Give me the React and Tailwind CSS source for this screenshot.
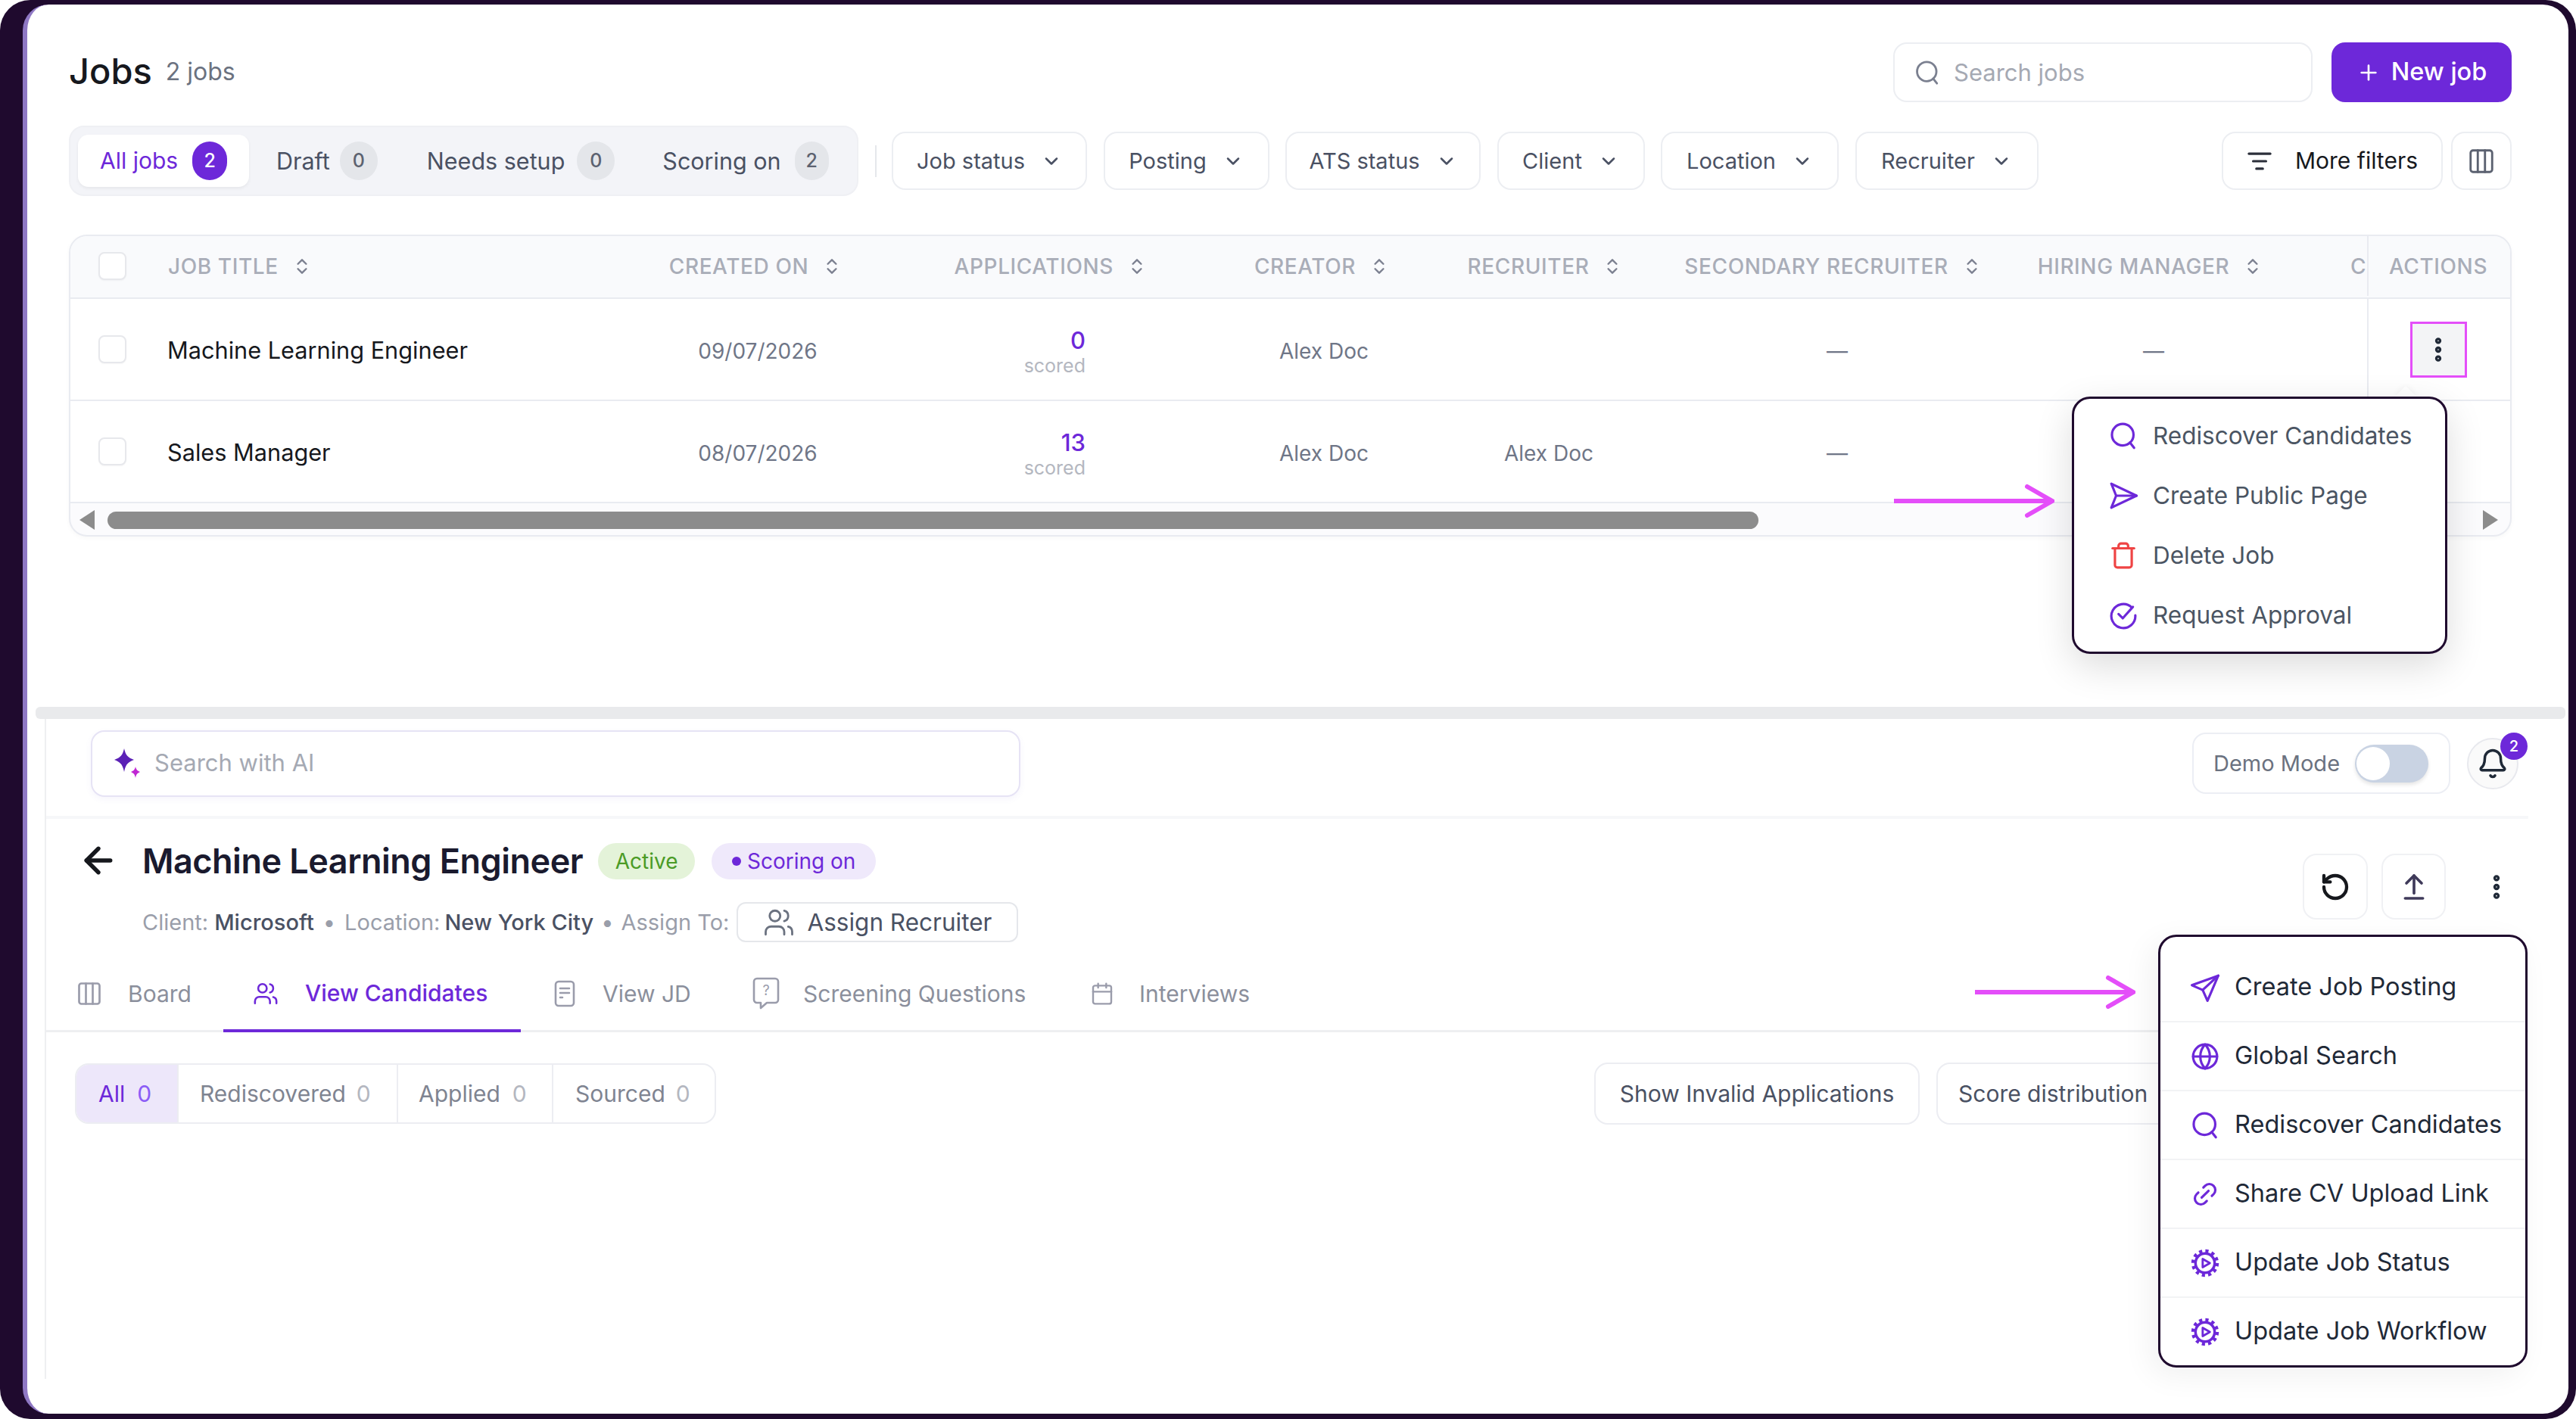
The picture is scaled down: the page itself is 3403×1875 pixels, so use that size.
import { Plus, ChevronDown, ChevronsUpDown, Columns3, ListFilter, EllipsisVertical, Trash, Globe, Link2, RotateCcw, ArrowUpFromLine, Bell, Users, Calendar, ArrowLeft } from 'lucide-react'

const FONT = "font-['Inter','Noto_Sans',sans-serif]"

function Q({ size = 36, className = '' }) {
  return (
    <svg width={size} height={size} viewBox="0 0 24 24" fill="none" stroke="currentColor" strokeWidth="2" strokeLinecap="round" className={className}>
      <circle cx="11.5" cy="11" r="9" />
      <path d="M17.5 17.5 21 22" />
    </svg>
  )
}

function Plane({ size = 38, className = '' }) {
  return (
    <svg width={size} height={size} viewBox="0 0 24 24" fill="none" stroke="currentColor" strokeWidth="2" strokeLinejoin="round" strokeLinecap="round" className={className}>
      <path d="M2 2l21 10-21 10 4-10-4-10z" />
      <path d="M6 12h17" />
    </svg>
  )
}

function Pointer({ size = 38, className = '' }) {
  return (
    <svg width={size} height={size} viewBox="0 0 24 24" fill="none" stroke="currentColor" strokeWidth="2" strokeLinejoin="round" strokeLinecap="round" className={className}>
      <path d="M23 2 1 10l9 4 4 9 9-21z" />
      <path d="M10 14 23 2" />
    </svg>
  )
}

function CheckRing({ size = 38, className = '' }) {
  return (
    <svg width={size} height={size} viewBox="0 0 24 24" fill="none" stroke="currentColor" strokeWidth="2" strokeLinecap="round" strokeLinejoin="round" className={className}>
      <path d="M19 5.5A10 10 0 1 0 22 12" />
      <path d="m8 11 3.5 3.5L20 5" />
    </svg>
  )
}

function GearPlay({ size = 38, className = '' }) {
  return (
    <svg width={size} height={size} viewBox="0 0 24 24" fill="none" stroke="currentColor" strokeLinejoin="round" className={className}>
      <circle cx="12" cy="12" r="8" strokeWidth="2.2" />
      <circle cx="12" cy="12" r="10" strokeWidth="3" strokeDasharray="2.6 2.63" />
      <path d="M10 8.5v7l6-3.5-6-3.5z" strokeWidth="1.8" />
    </svg>
  )
}

function Sparkle() {
  return (
    <svg width="36" height="40" viewBox="0 0 36 40">
      <path d="M14 0c2 9 5 12 13 15-8 3-11 6-13 16-2-10-5-13-13-16 8-3 11-6 13-15z" fill="#5b21b6" />
      <path d="M29 24c1 4 2 5 6 7-4 2-5 3-6 8-1-5-2-6-6-8 4-2 5-3 6-7z" fill="#c026d3" />
    </svg>
  )
}

function DocIcon() {
  return (
    <svg width="30" height="36" viewBox="0 0 30 36" fill="none" stroke="#9a9cab" strokeWidth="2.6" strokeLinecap="round">
      <rect x="3" y="2" width="24" height="32" rx="4" />
      <path d="M9 11h12M9 17h12M9 23h3" />
    </svg>
  )
}

function QuestionBubble() {
  return (
    <svg width="36" height="44" viewBox="0 0 36 44" fill="none" stroke="#9a9cab" strokeWidth="2.6" strokeLinejoin="round">
      <path d="M6 2h24a4 4 0 0 1 4 4v24a4 4 0 0 1-4 4H19l-8 7v-7H6a4 4 0 0 1-4-4V6a4 4 0 0 1 4-4z" />
      <text x="18" y="24" fontSize="18" textAnchor="middle" fill="#9a9cab" stroke="none" fontFamily="Inter">?</text>
    </svg>
  )
}

function Arrow({ className = '', width = 210 }) {
  return (
    <svg width={width} height="44" viewBox={`0 0 ${width} 44`} fill="none" stroke="#e44ef9" strokeLinecap="round" className={`absolute ${className}`}>
      <path d={`M0 22H${width - 4}`} strokeWidth="6" strokeLinecap="butt" />
      <path d={`M${width - 36} 3l33 19-33 19`} strokeWidth="6" />
    </svg>
  )
}

function Checkbox() {
  return <div className="w-[37px] h-[37px] rounded-[8px] border-2 border-[#e7e8ec] bg-white shadow-[0_1px_2px_rgba(0,0,0,0.04)]" />
}

function FilterBtn({ label, w }) {
  return (
    <button className={`${w} h-[77px] shrink-0 rounded-[18px] border-2 border-[#eceef2] bg-white flex items-center justify-center gap-[21px] text-[29px] text-[#4a5163]`}>
      {label}
      <ChevronDown size={28} strokeWidth={2.2} className="text-[#4a5163]" />
    </button>
  )
}

function TabCount({ n, active, w = 'w-[50px]' }) {
  return (
    <span className={`${w} h-[51px] rounded-full flex items-center justify-center text-[25px] font-medium ${active ? 'bg-[#6d28d9] text-white' : 'bg-[#e4e6ea] text-[#5c6270]'}`}>{n}</span>
  )
}

function Head({ label, sort = true }) {
  return (
    <span className="flex items-center gap-[18px] whitespace-nowrap text-[28px] font-medium tracking-[0.6px] text-[#a9adb8]">
      {label}
      {sort && <ChevronsUpDown size={26} strokeWidth={2.2} className="text-[#7c8090]" />}
    </span>
  )
}

const TEAL = 'text-[28px] text-[#6f7687] pt-[4px]'

function JobRow({ title, date, count, recruiter, hiring, kebab }) {
  return (
    <div className="h-[135px] flex items-center border-b-2 border-[#e9ebf1] bg-white">
      <div className="w-[129px] pl-[37px] shrink-0"><Checkbox /></div>
      <div className="w-[649px] shrink-0 text-[30.7px] text-[#16181d] pt-[4px] -ml-[1px] mr-[1px]">{title}</div>
      <div className={`w-[260px] shrink-0 text-center ${TEAL}`}>{date}</div>
      <div className="w-[510px] shrink-0 text-right pr-[207px] leading-none pt-[6px]">
        <div className="text-[31px] text-[#6d28d9] font-medium leading-[36px]">{count}</div>
        <div className="text-[25px] text-[#b4b7c0] leading-[30px]">scored</div>
      </div>
      <div className={`w-[216px] shrink-0 text-center ${TEAL}`}>Alex Doc</div>
      <div className={`w-[368px] shrink-0 text-center ${TEAL} pl-[10px]`}>{recruiter}</div>
      <div className={`w-[396px] shrink-0 text-center ${TEAL} pl-[8px]`}>—</div>
      <div className={`w-[442px] shrink-0 text-center ${TEAL} pl-[6px]`}>{hiring}</div>
      <div className="w-[64px] shrink-0" />
      <div className="flex-1 self-stretch border-l-2 border-[#e9ebf1] flex items-center justify-center">
        {kebab && (
          <div className="w-[75px] h-[74px] border-[3px] border-[#e44ef9] bg-[#f3f4f6] flex items-center justify-center -ml-[3px]">
            <EllipsisVertical size={40} strokeWidth={3} className="text-[#1f2937]" />
          </div>
        )}
      </div>
    </div>
  )
}

function MenuOne() {
  const items = [
    [<Q key="q" size={38} className="text-[#6d28d9]" />, 'Rediscover Candidates'],
    [<Plane key="p" size={38} className="text-[#6d28d9]" />, 'Create Public Page'],
    [<Trash key="t" size={38} strokeWidth={2} className="text-[#ef4444]" />, 'Delete Job'],
    [<CheckRing key="c" size={38} className="text-[#6d28d9]" />, 'Request Approval'],
  ]
  return (
    <>
      <div className="absolute left-[3132px] top-[508px] w-[20px] h-[20px] rotate-45 bg-white shadow-[0_0_8px_rgba(0,0,0,0.06)]" />
      <div className="absolute left-[2701px] top-[518px] w-[496px] h-[340px] rounded-[24px] border-[3px] border-[#1f0a2e] bg-white shadow-[0_16px_50px_rgba(0,0,0,0.14)] pl-[46px] pt-[9px]">
        {items.map(([icon, label]) => (
          <div key={label} className="h-[79px] flex items-center gap-[20px] text-[31.5px] text-[#4b5563] whitespace-nowrap">
            {icon}
            {label}
          </div>
        ))}
      </div>
    </>
  )
}

function MenuTwo() {
  const items = [
    [<Pointer key="a" size={38} className="text-[#6d28d9]" />, 'Create Job Posting'],
    [<Globe key="b" size={38} strokeWidth={2} className="text-[#6d28d9]" />, 'Global Search'],
    [<Q key="c" size={38} className="text-[#6d28d9]" />, 'Rediscover Candidates'],
    [<Link2 key="d" size={38} strokeWidth={2} className="text-[#6d28d9] -rotate-45" />, 'Share CV Upload Link'],
    [<GearPlay key="e" size={38} className="text-[#6d28d9]" />, 'Update Job Status'],
    [<GearPlay key="f" size={38} className="text-[#6d28d9]" />, 'Update Job Workflow'],
  ]
  return (
    <div className="absolute left-[2815px] top-[1229px] w-[488px] h-[572px] rounded-[24px] border-[3px] border-[#1f0a2e] bg-white shadow-[-10px_10px_40px_rgba(0,0,0,0.06)] pt-[22px] overflow-hidden">
      {items.map(([icon, label]) => (
        <div key={label} className="h-[91px] flex items-center gap-[20px] pl-[40px] border-b-2 border-[#f2f3f5] text-[32.5px] text-[#1f2937] whitespace-nowrap">
          {icon}
          {label}
        </div>
      ))}
    </div>
  )
}

function TopSection() {
  return (
    <section className="h-[928px] shrink-0 pl-[55px] pr-[75px] pt-[50px]">
      <div className="flex items-center justify-between h-[79px]">
        <div className="flex items-baseline gap-[18px] pt-[3px]">
          <h1 className="text-[47px] font-medium text-[#16181d] leading-none">Jobs</h1>
          <span className="text-[32px] text-[#6b7280] -translate-y-[5px]">2 jobs</span>
        </div>
        <div className="flex items-center gap-[25px]">
          <div className="w-[554px] h-[79px] rounded-[18px] border-2 border-[#eceef2] flex items-center gap-[18px] pl-[26px] text-[31px] text-[#a5a9b3]">
            <Q size={34} className="text-[#7b8090]" />
            <span className="pt-[2px]">Search jobs</span>
          </div>
          <button className="w-[238px] h-[79px] rounded-[18px] bg-[#6d28d9] text-white flex items-center justify-center gap-[14px] text-[32.5px] font-medium">
            <Plus size={32} strokeWidth={2} />
            New job
          </button>
        </div>
      </div>

      <div className="flex items-center mt-[31px] h-[93px]">
        <div className="w-[1043px] h-[93px] rounded-[20px] bg-[#f3f4f8] border-2 border-[#eff0f4] flex items-center pl-[10px] text-[30.5px] text-[#4a5163] shrink-0">
          <div className="w-[226px] h-[69px] rounded-[14px] bg-white shadow-[0_2px_4px_rgba(0,0,0,0.06)] flex items-center pl-[29px] gap-[19px] text-[#6d28d9] shrink-0">
            <span className="text-[30px]">All jobs</span> <TabCount n="2" active w="w-[46px]" />
          </div>
          <span className="ml-[36px]">Draft</span>
          <span className="ml-[13px]"><TabCount n="0" /></span>
          <span className="ml-[65px]">Needs setup</span>
          <span className="ml-[16px]"><TabCount n="0" /></span>
          <span className="ml-[63px]">Scoring on</span>
          <span className="ml-[18px]"><TabCount n="2" w="w-[45px]" /></span>
        </div>
        <div className="w-[2px] h-[42px] bg-[#e5e7eb] ml-[22px] mr-[20px] shrink-0" />
        <div className="flex gap-[21.5px]">
          <FilterBtn label="Job status" w="w-[258px]" />
          <FilterBtn label="Posting" w="w-[219px]" />
          <FilterBtn label="ATS status" w="w-[258px]" />
          <FilterBtn label="Client" w="w-[195px]" />
          <FilterBtn label="Location" w="w-[235px]" />
          <FilterBtn label="Recruiter" w="w-[242px]" />
        </div>
        <div className="ml-auto flex gap-[11px]">
          <button className="w-[292px] h-[77px] rounded-[18px] border-2 border-[#eceef2] flex items-center justify-center gap-[30px] text-[30px] text-[#16181d]">
            <ListFilter size={34} strokeWidth={2.2} className="text-[#2b2f3a]" />
            More filters
          </button>
          <button className="w-[80px] h-[77px] rounded-[18px] border-2 border-[#eceef2] flex items-center justify-center">
            <Columns3 size={38} strokeWidth={1.8} className="text-[#5b6170]" />
          </button>
        </div>
      </div>

      <div className="mt-[51px] h-[399px] rounded-[24px] border-2 border-[#e9ebf1] overflow-hidden bg-[#fbfbfd] shadow-[0_2px_6px_rgba(0,0,0,0.03)]">
        <div className="h-[83px] pb-[2px] flex items-center bg-[#f9fafc] border-b-2 border-[#e9ebf1]">
          <div className="w-[129px] pl-[37px] shrink-0"><Checkbox /></div>
          <div className="w-[649px] shrink-0"><Head label="JOB TITLE" /></div>
          <div className="w-[260px] shrink-0 flex justify-center pr-[6px]"><Head label="CREATED ON" /></div>
          <div className="w-[510px] shrink-0 flex justify-end pr-[126px]"><Head label="APPLICATIONS" /></div>
          <div className="w-[216px] shrink-0 flex justify-center pr-[6px]"><Head label="CREATOR" /></div>
          <div className="w-[368px] shrink-0 flex justify-center"><Head label="RECRUITER" /></div>
          <div className="w-[396px] shrink-0 flex justify-center pr-[3px]"><Head label="SECONDARY RECRUITER" /></div>
          <div className="w-[442px] shrink-0 flex justify-center pr-[3px]"><Head label="HIRING MANAGER" /></div>
          <div className="w-[64px] shrink-0 pl-[42px] overflow-hidden"><Head label="C" sort={false} /></div>
          <div className="flex-1 self-stretch border-l-2 border-[#e9ebf1] flex items-center justify-center pr-[3px]"><Head label="ACTIONS" sort={false} /></div>
        </div>
        <JobRow title="Machine Learning Engineer" date="09/07/2026" count="0" recruiter="" hiring="—" kebab />
        <JobRow title="Sales Manager" date="08/07/2026" count="13" recruiter="Alex Doc" hiring="" />
        <div className="h-[44px] flex items-center pl-[12px] pr-[16px]">
          <div className="w-0 h-0 border-y-[13px] border-y-transparent border-r-[20px] border-r-[#8c8c8c]" />
          <div className="ml-[17px] w-[2181px] h-[23px] rounded-full bg-[#8c8c8c]" />
          <div className="ml-auto w-0 h-0 border-y-[13px] border-y-transparent border-l-[20px] border-l-[#8c8c8c]" />
        </div>
      </div>
    </section>
  )
}

function BottomSection() {
  return (
    <section className="ml-[23px] mr-[53px] h-[872px] shrink-0 border-l-2 border-[#eeeff1]">
      <div className="h-[132px] pl-[59px] pr-[13px] pt-[14px] pb-[25px] flex items-center justify-between border-b-[4px] border-[#f6f7f9]">
        <div className="w-[1228px] h-[88px] rounded-[18px] border-2 border-[#e6e3f5] shadow-[0_3px_8px_rgba(100,80,200,0.06)] flex items-center pl-[28px] gap-[18px] text-[31px] text-[#a5a9b3]">
          <Sparkle />
          Search with AI
        </div>
        <div className="flex items-center gap-[22px]">
          <div className="w-[341px] h-[81px] rounded-[18px] border-2 border-[#eceef4] flex items-center pl-[26px] gap-[20px] text-[29px] text-[#6b7280]">
            Demo Mode
            <div className="relative w-[97px] h-[50px] rounded-full bg-[#c9d3e3] shadow-[0_3px_5px_rgba(0,0,0,0.1)]">
              <div className="absolute left-[2px] top-[3px] w-[44px] h-[44px] rounded-full bg-white" />
            </div>
          </div>
          <div className="relative w-[68px] h-[68px] rounded-full border-2 border-[#e8e9ee] bg-[#fafafa] flex items-center justify-center">
            <Bell size={42} strokeWidth={2} className="text-[#1f2937]" />
            <span className="absolute -right-[14px] -top-[9px] w-[36px] h-[36px] rounded-full bg-[#6d28d9] text-white text-[20px] font-medium flex items-center justify-center">2</span>
          </div>
        </div>
      </div>

      <div className="h-[183px] flex">
        <div className="pl-[42px] pt-[28px] flex items-start gap-[31px]">
          <ArrowLeft size={54} strokeWidth={2.4} className="text-[#16181d] shrink-0" />
          <div className="flex flex-col">
            <div className="flex items-center h-[50px] gap-[20px] mt-[3px]">
              <h2 className="text-[45px] font-semibold text-[#1a1a2e] tracking-[-0.5px] whitespace-nowrap">Machine Learning Engineer</h2>
              <span className="w-[128px] h-[48px] rounded-full bg-[#e4f3d9] text-[#4b9b27] text-[28px] flex items-center justify-center">Active</span>
              <span className="ml-[2px] w-[217px] h-[48px] rounded-full bg-[#efe9fb] text-[#6d28d9] text-[28px] flex items-center justify-center gap-[8px]">
                <span className="w-[12px] h-[12px] rounded-full bg-[#6d28d9]" />
                Scoring on
              </span>
            </div>
            <div className="flex items-center h-[53px] mt-[29px] text-[29px] text-[#9a9eaa] whitespace-nowrap">
              Client:<span className="ml-[8px] text-[#4a5163] font-medium">Microsoft</span>
              <span className="mx-[12px] text-[#9a9eaa]">•</span>
              Location:<span className="ml-[6px] text-[#4a5163] font-medium">New York City</span>
              <span className="mx-[10px] text-[#9a9eaa]">•</span>
              Assign To:
              <button className="ml-[10px] w-[372px] h-[53px] rounded-[12px] border-2 border-[#e5e7eb] flex items-center justify-center gap-[16px] text-[31.5px] text-[#4a5163]">
                <Users size={42} strokeWidth={1.6} className="text-[#6b7280]" />
                Assign Recruiter
              </button>
            </div>
          </div>
        </div>
        <div className="ml-auto pt-[46px] pr-[22px] flex items-start">
          <button className="w-[86px] h-[87px] rounded-[18px] border-2 border-[#f0f1f4] flex items-center justify-center">
            <RotateCcw size={40} strokeWidth={2.6} className="text-[#16181d]" />
          </button>
          <button className="ml-[18px] w-[85px] h-[87px] rounded-[18px] border-2 border-[#f0f1f4] flex items-center justify-center">
            <ArrowUpFromLine size={40} strokeWidth={2.2} className="text-[#3f3a5a]" />
          </button>
          <div className="ml-[47px] w-[40px] h-[87px] flex items-center justify-center">
            <EllipsisVertical size={44} strokeWidth={3} className="text-[#1f2937]" />
          </div>
        </div>
      </div>

      <div className="h-[99px] flex items-stretch border-b-[3px] border-[#eeeff1] text-[30px] text-[#8b8f9c]">
        <div className="w-[234px] pl-[39px] flex items-center gap-[33px]">
          <Columns3 size={36} strokeWidth={1.8} className="text-[#9a9cab]" />
          Board
        </div>
        <div className="w-[393px] pl-[39px] flex items-center gap-[35px] text-[#6d28d9] font-medium border-b-[4px] border-[#6d28d9] -mb-[3px]">
          <Users size={34} strokeWidth={1.8} />
          View Candidates
        </div>
        <div className="ml-[4px] w-[263px] pl-[39px] flex items-center gap-[35px]">
          <DocIcon />
          View JD
        </div>
        <div className="w-[442px] pl-[39px] flex items-center gap-[31px]">
          <QuestionBubble />
          Screening Questions
        </div>
        <div className="ml-[4px] pl-[39px] flex items-center gap-[33px]">
          <Calendar size={32} strokeWidth={1.8} className="text-[#9a9cab]" />
          Interviews
        </div>
      </div>

      <div className="mt-[40px] pl-[38px] pr-[452px] flex items-center justify-between">
        <div className="h-[80px] w-[847px] rounded-[18px] border-2 border-[#ecedf2] flex overflow-hidden text-[30px] text-[#7f8491]">
          <div className="w-[133px] shrink-0 bg-[#ede7fa] text-[#6d28d9] flex items-center pl-[29px] gap-[16px]">All <span className="text-[#8b5cf6]">0</span></div>
          <div className="w-[290px] shrink-0 border-l-2 border-[#ecedf2] flex items-center pl-[28px] gap-[14px]">Rediscovered <span className="text-[#b4b7c0]">0</span></div>
          <div className="w-[205px] shrink-0 border-l-2 border-[#ecedf2] flex items-center pl-[27px] gap-[16px]">Applied <span className="text-[#b4b7c0]">0</span></div>
          <div className="flex-1 border-l-2 border-[#ecedf2] flex items-center pl-[29px] gap-[14px]">Sourced <span className="text-[#b4b7c0]">0</span></div>
        </div>
        <div className="flex gap-[22px]">
          <button className="w-[430px] h-[82px] rounded-[18px] border-2 border-[#ecedf2] text-[30px] text-[#4a5163]">Show Invalid Applications</button>
          <button className="w-[330px] h-[82px] rounded-[18px] border-2 border-[#ecedf2] text-[30px] text-[#4a5163] text-left pl-[27px]">Score distribution</button>
        </div>
      </div>
    </section>
  )
}

export default function App() {
  return (
    <div className={`w-[3403px] h-[1875px] bg-white overflow-hidden ${FONT}`}>
      <div className="h-full rounded-[40px] bg-[#1f0a2e] pt-[6px] pl-[30px] pr-[10px] pb-[7px]">
        <div className="relative h-full rounded-[34px] bg-white border-l-[6px] border-[#8f78c4] flex flex-col overflow-hidden">
          <TopSection />
          <div className="ml-[11px] mr-[4px] h-[16px] shrink-0 rounded-[6px] bg-[#e9eaec]" />
          <BottomSection />
          <MenuOne />
          <Arrow className="left-[2466px] top-[634px]" width={212} />
          <MenuTwo />
          <Arrow className="left-[2573px] top-[1283px]" width={212} />
        </div>
      </div>
    </div>
  )
}
